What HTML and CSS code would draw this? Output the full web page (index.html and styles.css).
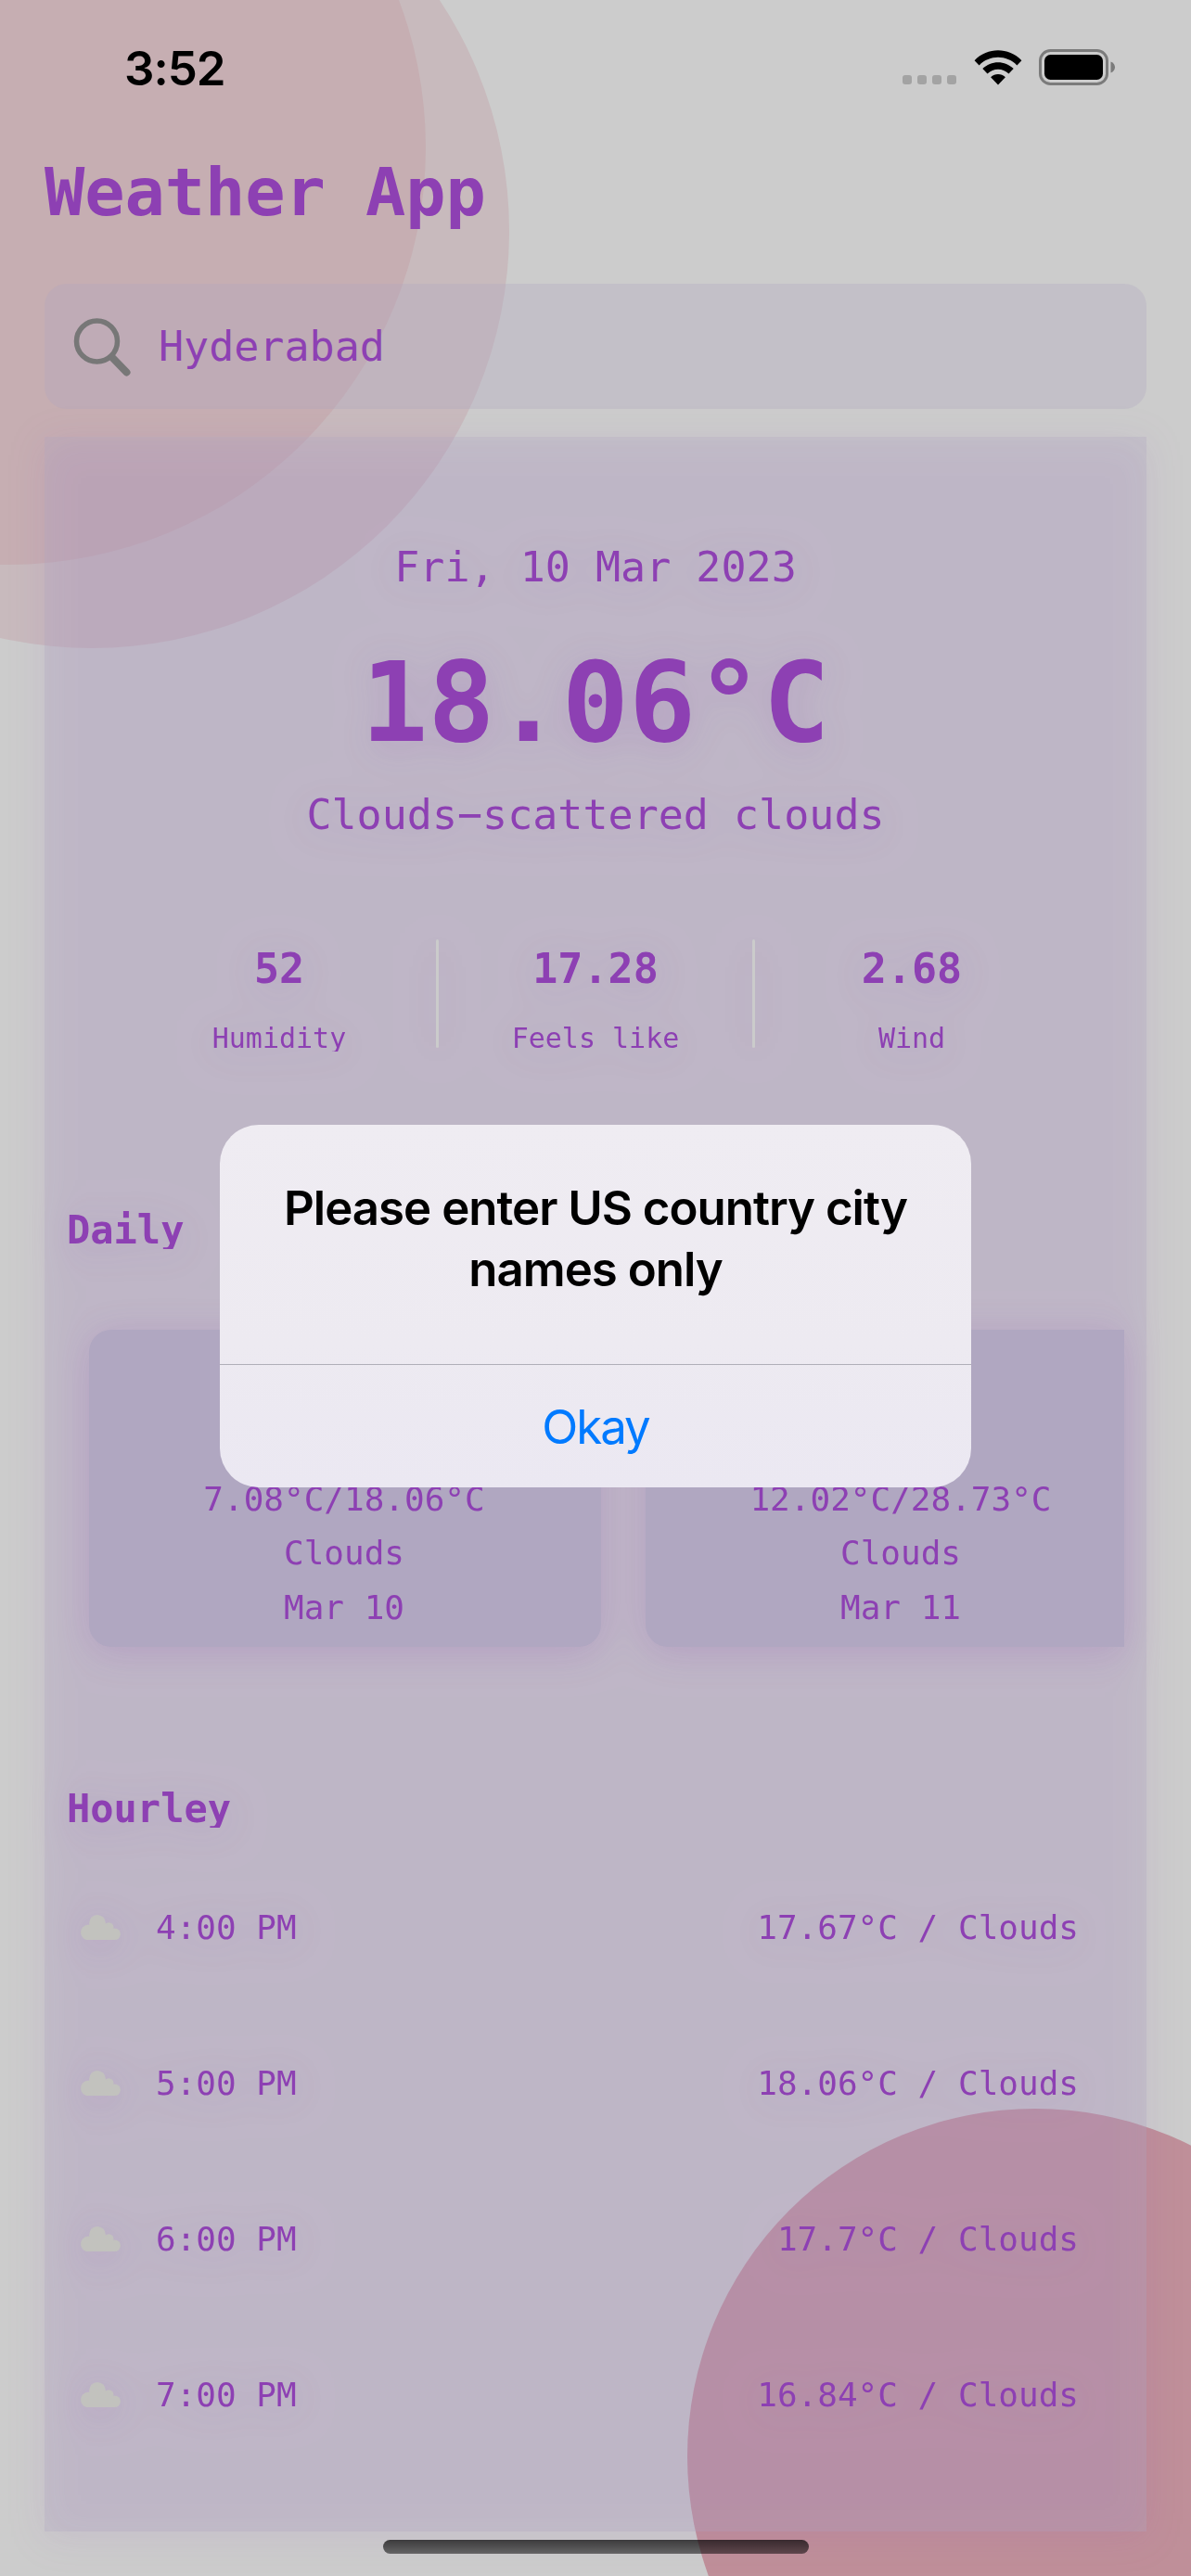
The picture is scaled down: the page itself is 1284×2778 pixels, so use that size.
FILE: index.html
```html
<!DOCTYPE html>
<html lang="en">
<head>
<meta charset="utf-8">
<title>Weather App</title>
<link rel="stylesheet" href="styles.css">
</head>
<body>
<svg class="defs" width="0" height="0" aria-hidden="true">
  <symbol id="cloud" viewBox="0 0 43 27">
    <circle cx="8.2" cy="19" r="8.2"/>
    <circle cx="18" cy="8.8" r="8.8"/>
    <circle cx="30.3" cy="13.4" r="5.2"/>
    <circle cx="36.6" cy="20.7" r="6.3"/>
    <path d="M8 27V14L10 9H26L34 14L37 18V27Z"/>
  </symbol>
</svg>
<div class="screen">
  <div class="bubble bubble-a"></div>
  <div class="bubble bubble-b"></div>
  <div class="bubble bubble-c"></div>

  <header class="status">
    <span class="clock">3:52</span>
    <div class="indicators">
      <div class="signal"><i></i><i></i><i></i><i></i></div>
      <svg class="wifi" width="52" height="38" viewBox="0 0 52 38">
        <path d="M.6 11.2C14.8-3.3 37.200-3.300 51.400 11.200L46.400 16.400C35 5 17 5 5.600 16.400Z"/>
        <path d="M9.300 20.100C18.600 10.800 33.400 10.800 42.700 20.100L37.500 25.500C31 19.200 21 19.200 14.500 25.500Z"/>
        <path d="M18.100 29.200C22.600 24.900 29.400 24.900 33.900 29.200L26 37.600Z"/>
      </svg>
      <svg class="battery" width="83" height="40" viewBox="0 0 83 40">
        <rect x="1.500" y="1.500" width="72" height="36" rx="11" fill="none" stroke="#7b7b7b" stroke-width="3"/>
        <rect x="6" y="6" width="63" height="27" rx="6.500"/>
        <path d="M77.500 13.500C83.500 15.500 83.500 23.500 77.500 25.500Z" fill="#7b7b7b"/>
      </svg>
    </div>
  </header>

  <main class="app">
    <h1 class="title">Weather App</h1>
    <div class="search">
      <svg width="62" height="64" viewBox="0 0 62 64" fill="none" stroke="#777" stroke-linecap="round">
        <circle cx="25.500" cy="26" r="22" stroke-width="5.500"/>
        <path d="M42 43.500L57.500 59.500" stroke-width="8"/>
      </svg>
      <span>Hyderabad</span>
    </div>

    <div class="panel">
      <section class="now">
        <div class="date">Fri, 10 Mar 2023</div>
        <div class="temp">18.06°C</div>
        <div class="sky">Clouds−scattered clouds</div>
      </section>
      <section class="stats">
        <div class="stat"><b>52</b><small>Humidity</small></div>
        <div class="rule"></div>
        <div class="stat"><b>17.28</b><small>Feels like</small></div>
        <div class="rule"></div>
        <div class="stat"><b>2.68</b><small>Wind</small></div>
      </section>
      <h2 class="heading daily-heading">Daily</h2>
      <section class="daily">
        <article class="day"><span>7.08°C/18.06°C</span><span>Clouds</span><span>Mar 10</span></article>
        <article class="day"><span>12.02°C/28.73°C</span><span>Clouds</span><span>Mar 11</span></article>
      </section>
      <h2 class="heading hourly-heading">Hourley</h2>
      <section class="hourly">
        <div class="hour"><svg class="cloud"><use href="#cloud"/></svg><span class="time">4:00 PM</span><span>17.67°C / Clouds</span></div>
        <div class="hour"><svg class="cloud"><use href="#cloud"/></svg><span class="time">5:00 PM</span><span>18.06°C / Clouds</span></div>
        <div class="hour"><svg class="cloud"><use href="#cloud"/></svg><span class="time">6:00 PM</span><span>17.7°C / Clouds</span></div>
        <div class="hour"><svg class="cloud"><use href="#cloud"/></svg><span class="time">7:00 PM</span><span>16.84°C / Clouds</span></div>
      </section>
    </div>
  </main>

  <div class="alert" role="alertdialog">
    <p class="message">Please enter US country city<br>names only</p>
    <button class="okay">Okay</button>
  </div>
  <div class="home-indicator"></div>
</div>
</body>
</html>
```
FILE: styles.css
```css
* { box-sizing: border-box; }
body { margin: 0; background: #ccc; }
.defs { position: absolute; }

.screen {
  position: relative;
  width: 1284px;
  height: 2778px;
  overflow: hidden;
  background: #ccc;
  color: #8d40b3;
  font-family: "DejaVu Sans Mono", monospace;
}

/* Decorative circles behind the content */
.bubble { position: absolute; border-radius: 50%; }
.bubble-a { left: -351px; top: -201px; width: 900px; height: 900px; background: #c8babd; }
.bubble-b { left: -441px; top: -291px; width: 900px; height: 900px; background: #c6aeb2; }
.bubble-c { left: 741px; top: 2274px; width: 750px; height: 750px; background: #bf8f99; }

/* Status bar */
.status {
  position: relative;
  display: flex;
  justify-content: space-between;
  height: 141px;
  padding: 53px 81px 0 134px;
  color: #000;
  font-family: Inter, sans-serif;
}
.clock { font-size: 51px; font-weight: 600; line-height: 41px; letter-spacing: -1px; }
.indicators { display: flex; align-items: flex-start; height: 40px; }
.signal { display: flex; gap: 6px; margin: 28px 19px 0 0; }
.signal i { width: 10px; height: 10px; border-radius: 3px; background: #a3a3a3; }
.wifi { margin: 1px 18px 0 0; }

.app { position: relative; padding: 0 48px; }
.title { margin: 24px 0 57px; font-size: 72px; font-weight: 700; line-height: 84px; letter-spacing: -0.1px; }
.search {
  display: flex;
  align-items: center;
  gap: 30px;
  height: 135px;
  padding-left: 31px;
  border-radius: 24px;
  background: rgba(176, 167, 193, .3);
  font-size: 45px;
}

/* The shadow falls under the translucent panel and all it holds */
.panel {
  height: 2259px;
  margin-top: 30px;
  padding: 114px 24px 0;
  background: rgba(176, 167, 193, .3);
  filter: drop-shadow(0 6px 21px rgba(141, 64, 179, .34));
}
.now { text-align: center; font-size: 45px; line-height: 54px; }
.temp { margin: 47px 0 22px; font-size: 120px; font-weight: 700; line-height: 144px; }

.stats { display: flex; justify-content: center; height: 122px; margin-top: 106px; }
.stat { display: flex; flex-direction: column; width: 338px; padding-top: 6px; text-align: center; }
.stat b { font-size: 45px; line-height: 54px; }
.stat small { height: 29px; margin-top: 33px; overflow: hidden; font-size: 30px; line-height: 29px; }
.rule { width: 3px; height: 117px; margin-top: 1px; border-radius: 2px; background: #cbcbcb; }

.heading { height: 41px; margin: 0; overflow: hidden; font-size: 42px; font-weight: 700; line-height: 41px; }
.daily-heading { margin-top: 172px; }
.hourly-heading { margin-top: 154px; }

.daily { display: flex; gap: 48px; margin-top: 87px; padding-left: 24px; overflow: hidden; }
.day {
  display: flex;
  flex: none;
  flex-direction: column;
  justify-content: flex-end;
  width: 552px;
  height: 342px;
  padding: 0 2px 13px 0;
  border-radius: 24px;
  background: #b0a7c1;
  text-align: center;
  font-size: 36px;
  line-height: 58.5px;
}

.hourly { margin-top: 23px; font-size: 36px; }
.hour { display: flex; align-items: center; height: 168px; padding: 0 49px 0 15px; }
.cloud { width: 43px; height: 27px; fill: #c2c2be; }
.time { margin: 0 auto 0 38px; }

/* Modal alert */
.alert {
  position: absolute;
  left: 237px;
  top: 1213px;
  display: flex;
  flex-direction: column;
  width: 810px;
  height: 391px;
  overflow: hidden;
  border-radius: 42px;
  background: linear-gradient(#efecf2, #edeaf1 60%, #ebe8f2);
  font-family: Inter, sans-serif;
  font-size: 51px;
}
.message {
  flex: 1;
  margin: 0;
  padding-top: 57px;
  color: #000;
  text-align: center;
  font-weight: 600;
  line-height: 66px;
  letter-spacing: -1px;
}
.okay {
  height: 133px;
  padding: 0;
  border: 0;
  border-top: 1px solid #b0afb8;
  background: none;
  color: #007aff;
  font: inherit;
  letter-spacing: -2px;
}
.home-indicator {
  position: absolute;
  left: 413px;
  top: 2739px;
  width: 459px;
  height: 15px;
  border-radius: 8px;
  background: linear-gradient(rgba(0, 0, 0, .7), rgba(0, 0, 0, .5));
}
```
